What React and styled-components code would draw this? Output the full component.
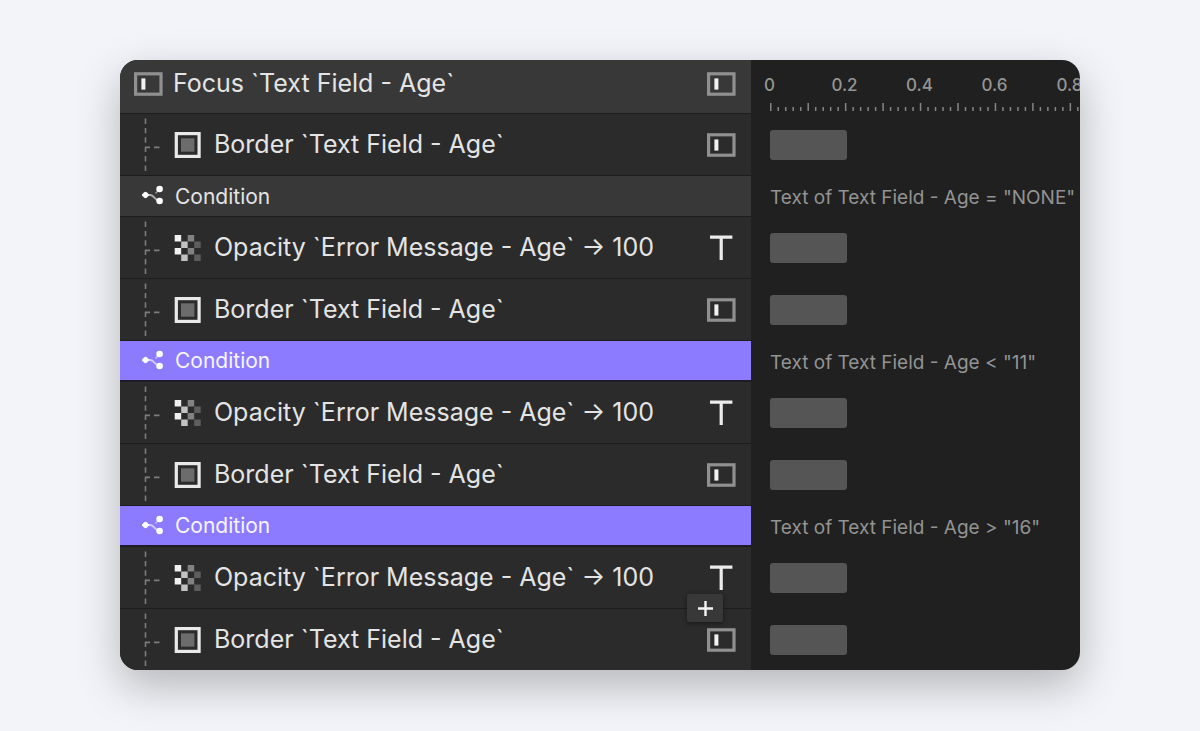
import React from 'react';
import styled, { createGlobalStyle } from 'styled-components';

const rows = [
  { kind: 'focus', label: 'Focus `Text Field - Age`', target: 'field' },
  { kind: 'border', label: 'Border `Text Field - Age`', target: 'field' },
  { kind: 'condition', label: 'Condition', note: 'Text of Text Field - Age = "NONE"' },
  { kind: 'opacity', label: 'Opacity `Error Message - Age` → 100', target: 'text' },
  { kind: 'border', label: 'Border `Text Field - Age`', target: 'field' },
  { kind: 'condition', label: 'Condition', note: 'Text of Text Field - Age < "11"', selected: true },
  { kind: 'opacity', label: 'Opacity `Error Message - Age` → 100', target: 'text' },
  { kind: 'border', label: 'Border `Text Field - Age`', target: 'field' },
  { kind: 'condition', label: 'Condition', note: 'Text of Text Field - Age > "16"', selected: true },
  { kind: 'opacity', label: 'Opacity `Error Message - Age` → 100', target: 'text' },
  { kind: 'border', label: 'Border `Text Field - Age`', target: 'field', canAdd: true },
];

const marks = ['0', '0.2', '0.4', '0.6', '0.8'];

const App = () => {
  return (
    <>
      <GlobalStyle />
      <Page>
        <Card>
          {rows.map((row, idx) => {
            if (row.kind === 'focus') return <FocusRow key={idx} row={row} />;
            if (row.kind === 'condition') return <ConditionRow key={idx} row={row} />;
            return <ActionRow key={idx} row={row} />;
          })}
        </Card>
      </Page>
    </>
  );
};

export default App;

const FocusRow = ({ row }) => (
  <Row>
    <HeaderCell>
      <FieldIcon />
      <Label>{row.label}</Label>
      <FieldIcon />
    </HeaderCell>
    <RulerCell>
      <Marks>
        {marks.map((mark) => (
          <Mark key={mark}>{mark}</Mark>
        ))}
      </Marks>
      <Ticks />
    </RulerCell>
  </Row>
);

const ConditionRow = ({ row }) => (
  <Row>
    <ConditionCell $selected={row.selected}>
      <BranchIcon />
      <ConditionLabel $selected={row.selected}>{row.label}</ConditionLabel>
    </ConditionCell>
    <TimeCell>
      <Note>{row.note}</Note>
    </TimeCell>
  </Row>
);

const ActionRow = ({ row }) => (
  <Row>
    <ActionCell>
      <Guide />
      {row.kind === 'border' ? <BorderIcon /> : <OpacityIcon />}
      <Label>{row.label}</Label>
      {row.target === 'field' ? <FieldIcon /> : <TextIcon />}
      {row.canAdd && (
        <AddButton type="button" aria-label="Add">
          <PlusIcon />
        </AddButton>
      )}
    </ActionCell>
    <TimeCell>
      <Bar />
    </TimeCell>
  </Row>
);

const FieldIcon = () => (
  <Icon width="29" height="24" viewBox="0 0 29 24">
    <rect x="1.6" y="1.8" width="25.4" height="20.4" fill="none" stroke="#909090" strokeWidth="3.2" />
    <rect x="7.4" y="6.4" width="4" height="11.2" fill="#f2f2f2" />
  </Icon>
);

const TextIcon = () => (
  <Icon width="29" height="26" viewBox="0 0 29 26">
    <path d="M3 2.2H25.4M14.2 2.2V25" fill="none" stroke="#ececec" strokeWidth="3.2" />
  </Icon>
);

const BorderIcon = () => (
  <Icon width="27" height="26" viewBox="0 0 27 26">
    <rect x="2.3" y="1.6" width="22.8" height="22.8" fill="none" stroke="#e9e9e9" strokeWidth="3.2" />
    <rect x="7" y="6.3" width="13.4" height="13.4" fill="#6c6c6c" />
  </Icon>
);

const OpacityIcon = () => (
  <Icon width="27" height="26" viewBox="0 0 27 26">
    <g transform="translate(.7 0)">
      <path d="M0 0h6.5v6.5H0zM0 13h6.5v6.5H0z" fill="#f0f0f0" />
      <path d="M6.5 6.5H13V13H6.5zM6.5 19.5H13V26H6.5z" fill="#c2c2c2" />
      <path d="M13 0h6.5v6.5H13zM13 13h6.5v6.5H13z" fill="#828282" />
      <path d="M19.5 6.5H26V13h-6.5zM19.5 19.5H26V26h-6.5z" fill="#5e5e5e" />
    </g>
  </Icon>
);

const BranchIcon = () => (
  <Icon width="22" height="20" viewBox="0 0 22 20">
    <g fill="none" stroke="#fff" strokeWidth="1.8">
      <path d="M3 10h5.5c3.5 0 5 6 9 6" opacity=".6" />
      <path d="M13.5 8.5L17.5 4" opacity=".45" />
    </g>
    <path d="M-.5 10l2.5-2.5q1.500-1.300 3 0l2.500 2.500l-2.500 2.500q-1.500 1.300-3 0z" fill="#fff" />
    <circle cx="17.6" cy="4" r="3.3" fill="#fff" />
    <circle cx="17.6" cy="16" r="3.3" fill="#fff" />
  </Icon>
);

const PlusIcon = () => (
  <Icon width="15" height="15" viewBox="0 0 15 15">
    <path d="M7.5 0v15M0 7.5h15" stroke="#f5f5f5" strokeWidth="2.4" />
  </Icon>
);

const Guide = () => (
  <Icon width="17" height="54" viewBox="0 0 17 54">
    <g fill="none" stroke="#7c7c7c" strokeWidth="1.6">
      <path d="M1.5 .5v53" strokeDasharray="5.4 4" />
      <path d="M1 29.4h5M10 29.4h5.500" />
    </g>
  </Icon>
);

const Ticks = () => (
  <Icon width="310" height="8" viewBox="0 0 310 8">
    {Array.from({ length: 42 }, (_, i) => (
      <rect
        key={i}
        x={i * 7.49}
        y={i % 5 === 0 ? 0 : 4}
        width="1.5"
        height={i % 5 === 0 ? 8 : 4}
        fill="#858585"
      />
    ))}
  </Icon>
);

const GlobalStyle = createGlobalStyle`
  * {
    box-sizing: border-box;
  }
  body {
    margin: 0;
    background: #f2f4f9;
    font-family: Inter, 'Liberation Sans', sans-serif;
  }
`;

const Page = styled.main`
  padding: 60px 10%;
`;

const Card = styled.ul`
  margin: 0;
  padding: 0;
  list-style: none;
  overflow: hidden;
  border-radius: 18px;
  background: #202020;
  box-shadow: 0 16px 44px rgba(0, 0, 0, 0.26);
`;

const Row = styled.li`
  display: grid;
  grid-template-columns: minmax(0, 631fr) minmax(0, 329fr);
`;

const Icon = styled.svg`
  display: block;
  flex: none;
`;

const Cell = styled.div`
  display: flex;
  align-items: center;
  padding-right: 15px;
`;

const HeaderCell = styled(Cell)`
  height: 53px;
  padding-left: 14px;
  padding-bottom: 6px;
  gap: 10px;
  background: #383838;
`;

const ActionCell = styled(Cell)`
  position: relative;
  height: 62px;
  padding-left: 24px;
  gap: 13px;
  border-top: 1px solid #1d1d1d;
  background: #2b2b2b;
`;

const ConditionCell = styled(Cell)`
  height: 41px;
  padding-left: 22px;
  padding-bottom: 2px;
  gap: 11px;
  border-top: 1px solid #1d1d1d;
  border-bottom: ${(props) => (props.$selected ? '1px solid #1d1a2e' : 'none')};
  background: ${(props) => (props.$selected ? '#8c7bff' : '#383838')};
`;

const Label = styled.span`
  flex: 1;
  padding-bottom: 2px;
  font-size: 25px;
  line-height: 32px;
  color: #e4e4e4;
  white-space: nowrap;
`;

const ConditionLabel = styled.span`
  padding-top: 3px;
  font-size: 21px;
  line-height: 26px;
  color: ${(props) => (props.$selected ? '#f7f5ff' : '#e4e4e4')};
`;

const TimeCell = styled.div`
  display: flex;
  align-items: center;
  padding-top: 2px;
  padding-left: 19px;
`;

const Bar = styled.div`
  width: 77px;
  height: 30px;
  border-radius: 3px;
  background: #555;
`;

const Note = styled.span`
  padding-top: 2px;
  font-size: 19px;
  line-height: 24px;
  color: #939393;
  white-space: nowrap;
`;

const RulerCell = styled.div`
  display: flex;
  flex-direction: column;
  justify-content: flex-end;
  gap: 8px;
  padding-left: 19px;
  padding-bottom: 2px;
  overflow: hidden;
`;

const Marks = styled.div`
  display: flex;
  margin-left: -38px;
`;

const Mark = styled.span`
  flex: none;
  width: 75px;
  font-size: 17px;
  font-weight: 500;
  line-height: 20px;
  text-align: center;
  color: #949494;
`;

const AddButton = styled.button`
  position: absolute;
  top: -15px;
  right: 28px;
  display: flex;
  align-items: center;
  justify-content: center;
  width: 36px;
  height: 28px;
  padding: 0;
  border: 0;
  border-radius: 2px;
  background: #383838;
  box-shadow: 0 1px 4px rgba(0, 0, 0, 0.5);
  cursor: pointer;
`;
